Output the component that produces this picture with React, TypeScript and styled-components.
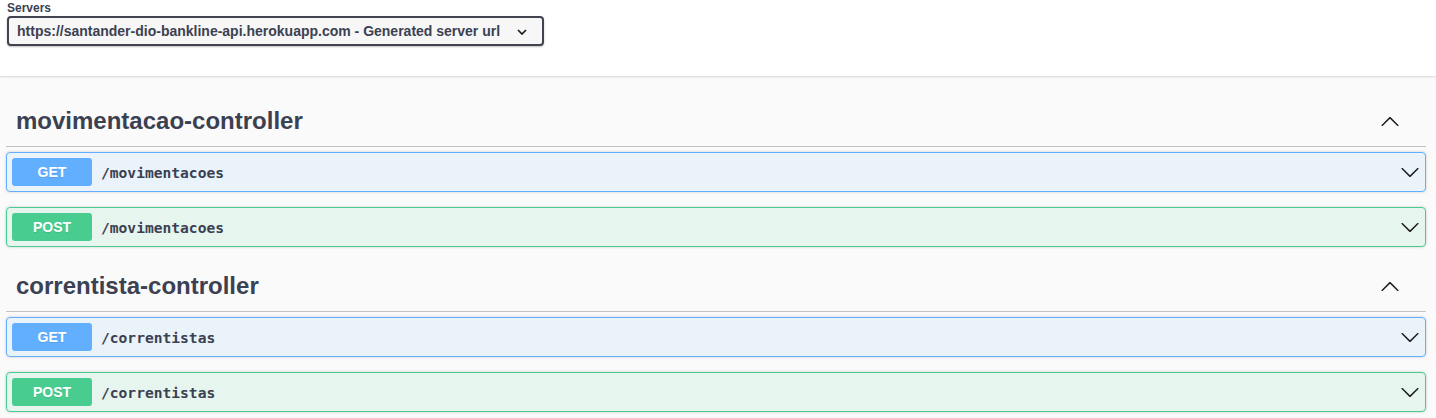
import React from "react";
import styled, { createGlobalStyle } from "styled-components";

const GlobalStyle = createGlobalStyle`
  html, body { margin: 0; padding: 0; }
  body {
    background: #fafafa;
    font-family: "Liberation Sans", Arial, sans-serif;
    color: #3b4151;
  }
`;

const SchemeContainer = styled.div`
  background: #fff;
  box-shadow: 0 1px 2px 0 rgba(0, 0, 0, 0.15);
  height: 76px;
  padding: 1px 7px 0;
  box-sizing: border-box;
`;

const ServersLabel = styled.div`
  font-size: 12px;
  font-weight: 700;
  line-height: 15px;
  color: #3b4151;
`;

const Select = styled.div`
  box-sizing: border-box;
  width: 537px;
  height: 30px;
  border: 2px solid #41444e;
  border-radius: 4px;
  background: #f7f7f7;
  box-shadow: 0 1px 2px 0 rgba(0, 0, 0, 0.25);
  padding: 0 15px 0 8px;
  display: flex;
  align-items: center;
  justify-content: space-between;
  font-size: 14px;
  font-weight: 700;
  color: #3b4151;
  white-space: nowrap;
`;

const SelectCaret = styled.svg`
  width: 10px;
  height: 6px;
  flex: none;
  fill: none;
  stroke: #1b1b1b;
  stroke-width: 1.7;
  margin-top: 1px;
`;

const Main = styled.main`
  padding: 21px 10px 0 6px;
`;

const TagSection = styled.section``;

const TagHeader = styled.h3`
  box-sizing: border-box;
  margin: 0 0 5px;
  height: 50px;
  padding: 0 26px 1px 10px;
  display: flex;
  align-items: center;
  justify-content: space-between;
  border-bottom: 1px solid rgba(59, 65, 81, 0.3);
  font-size: 24px;
  font-weight: 700;
  color: #3b4151;
`;

const Opblock = styled.div<{ $color: string; $bg: string }>`
  border: 1px solid ${(p) => p.$color};
  background: ${(p) => p.$bg};
  border-radius: 4px;
  margin: 0 0 15px;
  box-shadow: 0 0 3px rgba(0, 0, 0, 0.19);
`;

const Summary = styled.div`
  display: flex;
  align-items: center;
  padding: 5px;
`;

const Method = styled.span<{ $color: string }>`
  min-width: 80px;
  height: 28px;
  border-radius: 3px;
  background: ${(p) => p.$color};
  color: #fff;
  font-size: 14px;
  font-weight: 700;
  display: flex;
  align-items: center;
  justify-content: center;
  text-shadow: 0 1px 0 rgba(0, 0, 0, 0.1);
`;

const Path = styled.span`
  flex: 1;
  padding: 0 9px;
  font-family: "DejaVu Sans Mono", "Liberation Mono", monospace;
  font-size: 14.6px;
  font-weight: 700;
  color: #3b4151;
`;

const ArrowSvg = styled.svg`
  width: 20px;
  height: 20px;
  flex: none;
  fill: #1b1b1b;
`;

const downPath =
  "M17.418 6.109c.272-.268.709-.268.979 0s.271.701 0 .969l-7.908 7.83c-.27.268-.707.268-.979 0l-7.908-7.83c-.27-.268-.27-.701 0-.969.271-.268.709-.268.979 0L10 13.25l7.418-7.141z";
const upPath =
  "M17.418 14.908c.272.268.709.268.979 0s.271-.701 0-.969l-7.908-7.83c-.27-.268-.707-.268-.979 0l-7.908 7.83c-.27.268-.27.701 0 .969.271.268.709.268.979 0L10 7.767l7.418 7.141z";

const Arrow = ({ up }: { up?: boolean }) => (
  <ArrowSvg viewBox="0 0 20 20" aria-hidden="true">
    <path d={up ? upPath : downPath} />
  </ArrowSvg>
);

const methods = {
  GET: { color: "#61affe", bg: "rgba(97, 175, 254, 0.1)" },
  POST: { color: "#49cc90", bg: "rgba(73, 204, 144, 0.1)" },
} as const;

type Op = { method: keyof typeof methods; path: string };

const tags: { name: string; ops: Op[] }[] = [
  {
    name: "movimentacao-controller",
    ops: [
      { method: "GET", path: "/movimentacoes" },
      { method: "POST", path: "/movimentacoes" },
    ],
  },
  {
    name: "correntista-controller",
    ops: [
      { method: "GET", path: "/correntistas" },
      { method: "POST", path: "/correntistas" },
    ],
  },
];

export default function App() {
  return (
    <>
      <GlobalStyle />
      <SchemeContainer>
        <ServersLabel>Servers</ServersLabel>
        <Select>
          <span>https://santander-dio-bankline-api.herokuapp.com - Generated server url</span>
          <SelectCaret viewBox="0 0 10 6" aria-hidden="true">
            <polyline points="1,1 5,5 9,1" />
          </SelectCaret>
        </Select>
      </SchemeContainer>
      <Main>
        {tags.map((tag) => (
          <TagSection key={tag.name}>
            <TagHeader>
              <span>{tag.name}</span>
              <Arrow up />
            </TagHeader>
            {tag.ops.map((op) => (
              <Opblock
                key={op.method + op.path}
                $color={methods[op.method].color}
                $bg={methods[op.method].bg}
              >
                <Summary>
                  <Method $color={methods[op.method].color}>{op.method}</Method>
                  <Path>{op.path}</Path>
                  <Arrow />
                </Summary>
              </Opblock>
            ))}
          </TagSection>
        ))}
      </Main>
    </>
  );
}
